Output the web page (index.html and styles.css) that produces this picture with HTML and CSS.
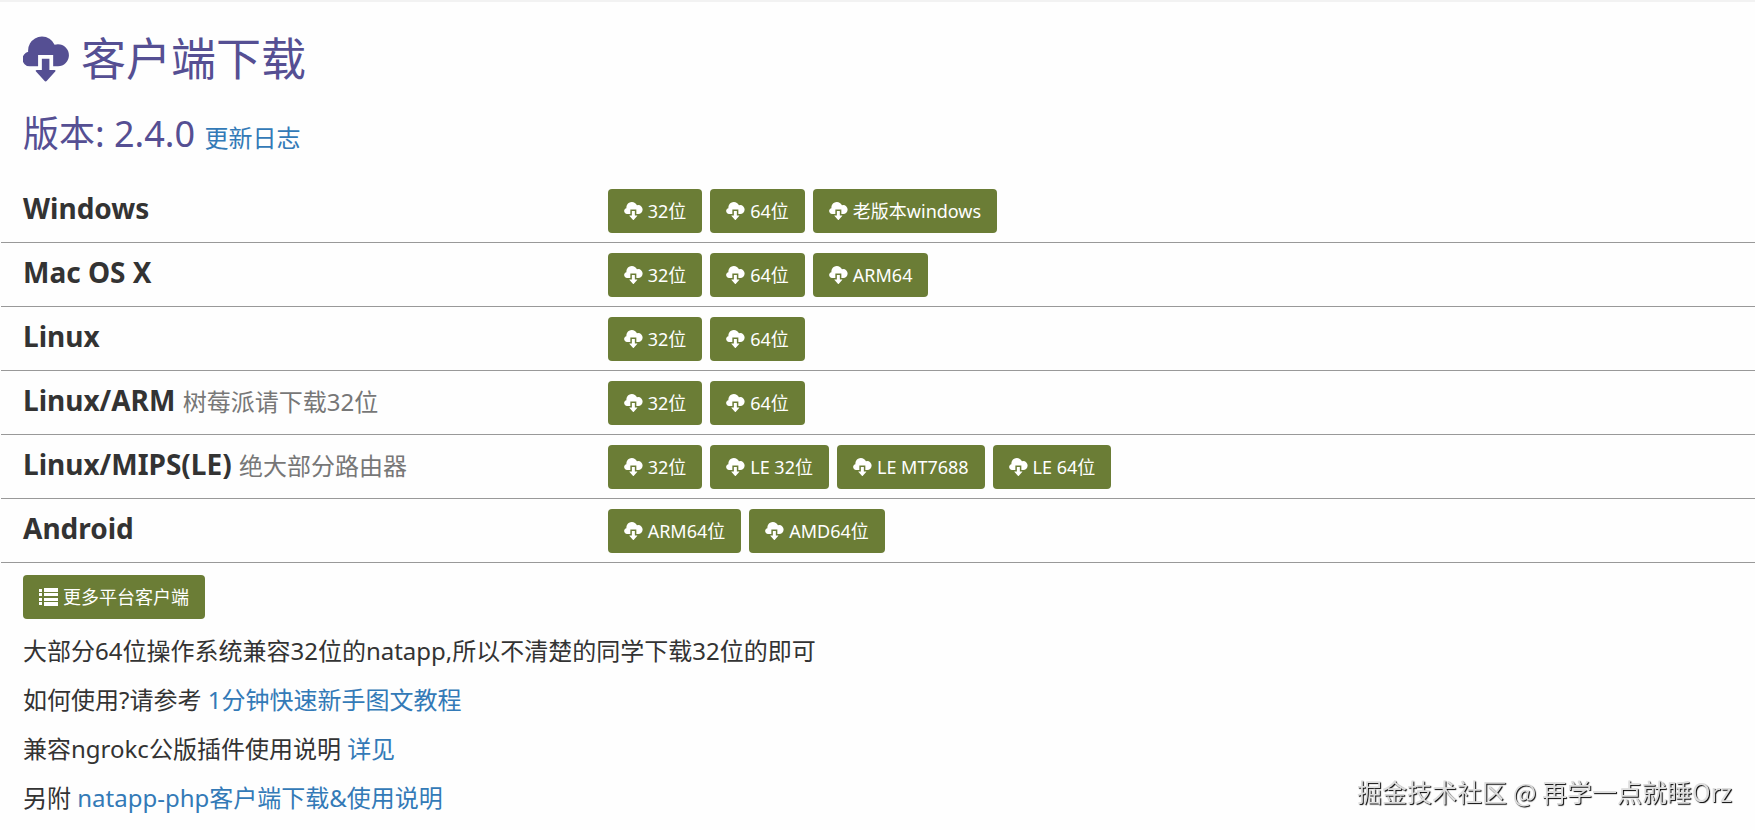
FILE: index.html
```html
<!DOCTYPE html>
<html lang="zh-CN">
<head>
<meta charset="utf-8">
<title>客户端下载</title>
<link rel="stylesheet" href="styles.css">
</head>
<body>
<svg class="defs" aria-hidden="true">
  <symbol id="cloud" viewBox="0 0 1220 1200">
    <path transform="translate(0 1095) scale(1 -1)" d="M503 1089q110 0 200.500 -59.500t134.500 -156.500q44 14 90 14q120 0 205 -86.500t85 -206.500q0 -121 -85 -207.500t-205 -86.500h-128v300h-400v-300h-222q-80 0 -136 57.500t-56 136.500q0 69 43 122.500t108 67.500q-2 19 -2 37q0 100 49 185t134 134t185 49zM500 500h200v-300h137q21 0 26 -11.500t-8 -27.500l-223 -244q-13 -16 -32 -16t-32 16l-223 244q-13 16 -8 27.500t26 11.500h137z"/>
  </symbol>
  <symbol id="list" viewBox="0 0 19 18">
    <path d="M0 1h3v3H0zM0 5h3v3H0zM0 10h3v3H0zM0 14h3v3H0zM5 0h14v4H5zM5 5h14v3H5zM5 10h14v3H5zM5 14h14v4H5z"/>
  </symbol>
</svg>
<main class="page">
  <header class="head">
    <h1 class="title"><svg class="title-icon" aria-hidden="true"><use href="#cloud"/></svg>客户端下载</h1>
    <h2 class="version">版本: 2.4.0 <a class="link changelog" href="#">更新日志</a></h2>
  </header>
  <section class="platforms">
    <div class="row">
      <h3 class="name">Windows</h3>
      <div class="downloads">
        <a class="btn" href="#"><svg class="icon" aria-hidden="true"><use href="#cloud"/></svg>32位</a>
        <a class="btn" href="#"><svg class="icon" aria-hidden="true"><use href="#cloud"/></svg>64位</a>
        <a class="btn" href="#"><svg class="icon" aria-hidden="true"><use href="#cloud"/></svg>老版本windows</a>
      </div>
    </div>
    <div class="row">
      <h3 class="name">Mac OS X</h3>
      <div class="downloads">
        <a class="btn" href="#"><svg class="icon" aria-hidden="true"><use href="#cloud"/></svg>32位</a>
        <a class="btn" href="#"><svg class="icon" aria-hidden="true"><use href="#cloud"/></svg>64位</a>
        <a class="btn" href="#"><svg class="icon" aria-hidden="true"><use href="#cloud"/></svg>ARM64</a>
      </div>
    </div>
    <div class="row">
      <h3 class="name">Linux</h3>
      <div class="downloads">
        <a class="btn" href="#"><svg class="icon" aria-hidden="true"><use href="#cloud"/></svg>32位</a>
        <a class="btn" href="#"><svg class="icon" aria-hidden="true"><use href="#cloud"/></svg>64位</a>
      </div>
    </div>
    <div class="row">
      <h3 class="name">Linux/ARM <small class="hint">树莓派请下载32位</small></h3>
      <div class="downloads">
        <a class="btn" href="#"><svg class="icon" aria-hidden="true"><use href="#cloud"/></svg>32位</a>
        <a class="btn" href="#"><svg class="icon" aria-hidden="true"><use href="#cloud"/></svg>64位</a>
      </div>
    </div>
    <div class="row">
      <h3 class="name">Linux/MIPS(LE) <small class="hint">绝大部分路由器</small></h3>
      <div class="downloads">
        <a class="btn" href="#"><svg class="icon" aria-hidden="true"><use href="#cloud"/></svg>32位</a>
        <a class="btn" href="#"><svg class="icon" aria-hidden="true"><use href="#cloud"/></svg>LE 32位</a>
        <a class="btn" href="#"><svg class="icon" aria-hidden="true"><use href="#cloud"/></svg>LE MT7688</a>
        <a class="btn" href="#"><svg class="icon" aria-hidden="true"><use href="#cloud"/></svg>LE 64位</a>
      </div>
    </div>
    <div class="row">
      <h3 class="name">Android</h3>
      <div class="downloads">
        <a class="btn" href="#"><svg class="icon" aria-hidden="true"><use href="#cloud"/></svg>ARM64位</a>
        <a class="btn" href="#"><svg class="icon" aria-hidden="true"><use href="#cloud"/></svg>AMD64位</a>
      </div>
    </div>
  </section>
  <section class="notes">
    <a class="btn" href="#"><svg class="icon" aria-hidden="true"><use href="#list"/></svg>更多平台客户端</a>
    <p class="note">大部分64位操作系统兼容32位的natapp,所以不清楚的同学下载32位的即可</p>
    <p class="note">如何使用?请参考 <a class="link" href="#">1分钟快速新手图文教程</a></p>
    <p class="note">兼容ngrokc公版插件使用说明 <a class="link" href="#">详见</a></p>
    <p class="note">另附 <a class="link" href="#">natapp-php客户端下载&amp;使用说明</a></p>
  </section>
</main>
<div class="watermark">掘金技术社区 @ 再学一点就睡Orz</div>
</body>
</html>
```
FILE: styles.css
```css
* { box-sizing: border-box; }

body {
  margin: 0;
  background: #fefefe;
  color: #333;
  font-family: "Noto Sans", "Noto Sans CJK SC", sans-serif;
  font-size: 24px;
}

.defs {
  position: absolute;
  width: 0;
  height: 0;
}

.page {
  border-top: 2px solid #f2f2f2;
  padding-left: 1px;
}

.head {
  padding: 32px 22px 21px;
  color: #554f93;
}

.title {
  display: flex;
  align-items: center;
  gap: 12px;
  margin: 0 0 30px;
  font-size: 45px;
  font-weight: 400;
  line-height: 50px;
}

.title-icon {
  width: 46px;
  height: 46px;
  fill: currentColor;
}

.version {
  margin: 0;
  font-size: 36px;
  font-weight: 400;
  line-height: 40px;
}

.changelog { font-size: 24px; }

.link {
  color: #337ab7;
  text-decoration: none;
}

.row {
  display: grid;
  grid-template-columns: 1fr 2fr;
  align-items: start;
  padding: 10px 0 9px;
  border-bottom: 1px solid #999;
}

.name {
  margin: 0;
  padding: 0 22px;
  font-size: 28px;
  font-weight: 700;
  line-height: 38px;
}

.hint {
  color: #777;
  font-size: 24px;
  font-weight: 400;
}

.downloads {
  display: flex;
  flex-wrap: wrap;
  gap: 8px;
  padding: 0 22px;
}

.btn {
  display: inline-flex;
  align-items: center;
  gap: 5px;
  height: 44px;
  padding: 0 16px;
  border-radius: 4px;
  background: #6b7d36;
  color: #fff;
  font-size: 18px;
  line-height: 24px;
  text-decoration: none;
}

.icon {
  width: 19px;
  height: 18px;
  fill: currentColor;
}

.notes {
  display: flex;
  flex-direction: column;
  align-items: flex-start;
  padding: 12px 22px;
}

.note {
  margin: 0;
  line-height: 34px;
  padding-top: 15px;
}

.watermark {
  position: fixed;
  right: 23px;
  bottom: 21px;
  color: #ddd;
  font-family: "Noto Sans CJK SC", sans-serif;
  font-size: 25px;
  line-height: 36px;
  text-shadow: 1px 1px 1px #000;
}
```
